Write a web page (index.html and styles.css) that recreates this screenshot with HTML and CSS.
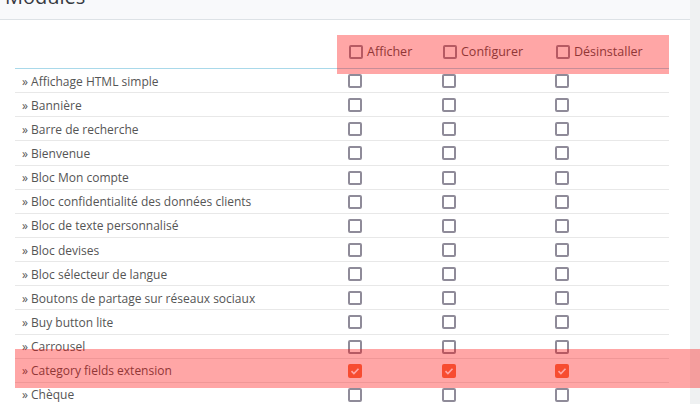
FILE: index.html
```html
<!DOCTYPE html>
<html lang="fr">
<head>
<meta charset="UTF-8" />
<title>Modules</title>
<link rel="stylesheet" href="styles.css">
</head>
<body>

<div class="panel">
    <div class="panel-heading"><h3>Modules</h3></div>
    <div class="panel-body">
        <div class="perm-table">
            <div class="row head">
                <div class="name"></div>
                <div class="col"><span class="cb"></span>Afficher</div>
                <div class="col"><span class="cb"></span>Configurer</div>
                <div class="col"><span class="cb"></span>Désinstaller</div>
            </div>
            <div class="row"><div class="name">» Affichage HTML simple</div><div class="col"><span class="cb"></span></div><div class="col"><span class="cb"></span></div><div class="col"><span class="cb"></span></div></div>
            <div class="row"><div class="name">» Bannière</div><div class="col"><span class="cb"></span></div><div class="col"><span class="cb"></span></div><div class="col"><span class="cb"></span></div></div>
            <div class="row"><div class="name">» Barre de recherche</div><div class="col"><span class="cb"></span></div><div class="col"><span class="cb"></span></div><div class="col"><span class="cb"></span></div></div>
            <div class="row"><div class="name">» Bienvenue</div><div class="col"><span class="cb"></span></div><div class="col"><span class="cb"></span></div><div class="col"><span class="cb"></span></div></div>
            <div class="row"><div class="name">» Bloc Mon compte</div><div class="col"><span class="cb"></span></div><div class="col"><span class="cb"></span></div><div class="col"><span class="cb"></span></div></div>
            <div class="row"><div class="name">» Bloc confidentialité des données clients</div><div class="col"><span class="cb"></span></div><div class="col"><span class="cb"></span></div><div class="col"><span class="cb"></span></div></div>
            <div class="row"><div class="name">» Bloc de texte personnalisé</div><div class="col"><span class="cb"></span></div><div class="col"><span class="cb"></span></div><div class="col"><span class="cb"></span></div></div>
            <div class="row"><div class="name">» Bloc devises</div><div class="col"><span class="cb"></span></div><div class="col"><span class="cb"></span></div><div class="col"><span class="cb"></span></div></div>
            <div class="row"><div class="name">» Bloc sélecteur de langue</div><div class="col"><span class="cb"></span></div><div class="col"><span class="cb"></span></div><div class="col"><span class="cb"></span></div></div>
            <div class="row"><div class="name">» Boutons de partage sur réseaux sociaux</div><div class="col"><span class="cb"></span></div><div class="col"><span class="cb"></span></div><div class="col"><span class="cb"></span></div></div>
            <div class="row"><div class="name">» Buy button lite</div><div class="col"><span class="cb"></span></div><div class="col"><span class="cb"></span></div><div class="col"><span class="cb"></span></div></div>
            <div class="row"><div class="name">» Carrousel</div><div class="col"><span class="cb"></span></div><div class="col"><span class="cb"></span></div><div class="col"><span class="cb"></span></div></div>
            <div class="row"><div class="name">» Category fields extension</div>
                <div class="col"><span class="cb on"><svg viewBox="0 0 14 14"><path d="M3.5 7.2l2.4 2.3 4.6-4.8"/></svg></span></div>
                <div class="col"><span class="cb on"><svg viewBox="0 0 14 14"><path d="M3.5 7.2l2.4 2.3 4.6-4.8"/></svg></span></div>
                <div class="col"><span class="cb on"><svg viewBox="0 0 14 14"><path d="M3.5 7.2l2.4 2.3 4.6-4.8"/></svg></span></div>
            </div>
            <div class="row"><div class="name">» Chèque</div><div class="col"><span class="cb"></span></div><div class="col"><span class="cb"></span></div><div class="col"><span class="cb"></span></div></div>
        </div>
    </div>
</div>

<div class="mark mark-head"></div>
<div class="mark mark-row"></div>

</body>
</html>
```

FILE: styles.css
```css
body {
    margin: 0;
    background: #eff1f2;
    font-family: "Open Sans", sans-serif;
    font-size: 12px;
    color: #555;
    height: 404px;
    overflow: hidden;
}
.panel {
    width: 690px;
    background: #fff;
    height: 404px;
}
.panel-heading {
    height: 19px;
    background: #f8f9fb;
    border-bottom: 1px solid #dde2e6;
    overflow: hidden;
}
.panel-heading h3 {
    margin: -15px 0 0 5px;
    font-size: 20px;
    line-height: 24px;
    font-weight: 400;
    color: #363a41;
}
.panel-body {
    padding: 13px 21px 0 15px;
}
.row {
    display: grid;
    grid-template-columns: 325px 94px 113px 122px;
    align-items: center;
    box-sizing: border-box;
    height: 24.15px;
    padding-top: 1px;
    border-bottom: 1px solid #e8e8e8;
}
.row.head {
    height: 36px;
    padding-top: 2px;
    border-bottom-color: #a9d9ea;
}
.name {
    padding-left: 7px;
    white-space: nowrap;
}
.col {
    display: flex;
    align-items: center;
    gap: 4px;
    padding-left: 8px;
}
.head .col {
    padding-left: 9px;
    font-size: 12.5px;
}
.cb {
    display: inline-block;
    width: 14px;
    height: 14px;
    box-sizing: border-box;
    border: 2px solid #8f8b99;
    border-radius: 2px;
}
.cb.on {
    border: none;
    background: #f3764a;
}
.cb svg {
    display: block;
    width: 14px;
    height: 14px;
    fill: none;
    stroke: #fff;
    stroke-width: 1.6;
}
.mark {
    position: absolute;
    background: rgba(255, 0, 0, 0.35);
}
.mark-head {
    left: 337px;
    top: 35px;
    width: 332px;
    height: 39px;
}
.mark-row {
    left: 15px;
    top: 349px;
    width: 685px;
    height: 39px;
}
```
